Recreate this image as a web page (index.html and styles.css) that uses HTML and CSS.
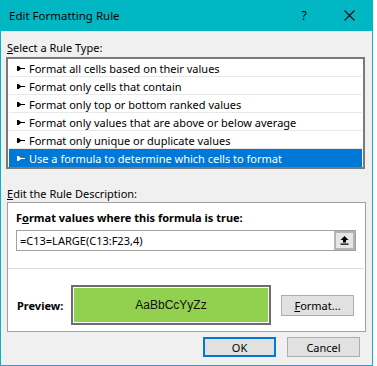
FILE: index.html
```html
<!DOCTYPE html>
<html lang="en">
<head>
  <meta charset="UTF-8" />
  <title>Edit Formatting Rule</title>
  <link rel="stylesheet" href="styles.css">
</head>
<body>
  <div class="dialog">
    <div class="titlebar">
      <span class="title">Edit Formatting Rule</span>
      <span class="help">?</span>
      <svg class="close" width="11" height="11" viewBox="0 0 11 11">
        <path d="M0.5 0.5L10.5 10.5M10.5 0.5L0.5 10.5" stroke="#111" stroke-width="1.1" fill="none"/>
      </svg>
    </div>

    <div class="content">
      <div class="label"><u>S</u>elect a Rule Type:</div>
      <ul class="rules">
        <li><svg class="bullet" width="8" height="5" viewBox="0 0 8 5"><path d="M0 0h1.5l2.5 2h4v1h-4l-2.5 2H0z"/></svg>Format all cells based on their values</li>
        <li><svg class="bullet" width="8" height="5" viewBox="0 0 8 5"><path d="M0 0h1.5l2.5 2h4v1h-4l-2.5 2H0z"/></svg>Format only cells that contain</li>
        <li><svg class="bullet" width="8" height="5" viewBox="0 0 8 5"><path d="M0 0h1.5l2.5 2h4v1h-4l-2.5 2H0z"/></svg>Format only top or bottom ranked values</li>
        <li><svg class="bullet" width="8" height="5" viewBox="0 0 8 5"><path d="M0 0h1.5l2.5 2h4v1h-4l-2.5 2H0z"/></svg>Format only values that are above or below average</li>
        <li><svg class="bullet" width="8" height="5" viewBox="0 0 8 5"><path d="M0 0h1.5l2.5 2h4v1h-4l-2.5 2H0z"/></svg>Format only unique or duplicate values</li>
        <li class="selected"><svg class="bullet" width="8" height="5" viewBox="0 0 8 5"><path d="M0 0h1.5l2.5 2h4v1h-4l-2.5 2H0z"/></svg>Use a formula to determine which cells to format</li>
      </ul>

      <div class="label desc-label"><u>E</u>dit the Rule Description:</div>
      <div class="desc">
        <div class="desc-top">
          <div class="bold">F<u>o</u>rmat values where this formula is true:</div>
          <div class="formula">
            <span class="formula-text">=C13=LARGE(C13:F23,4)</span>
            <span class="ref-btn">
              <svg width="9" height="9" viewBox="0 0 9 9">
                <path d="M4.5 0L8.5 4H6V6.5H3V4H0.5Z M0.5 7.5H8.5V8.8H0.5Z" fill="#000"/>
              </svg>
            </span>
          </div>
        </div>
        <div class="desc-bottom">
          <span class="bold preview-label">Preview:</span>
          <div class="preview"><div class="preview-fill">AaBbCcYyZz</div></div>
          <button class="btn format-btn"><u>F</u>ormat...</button>
        </div>
      </div>

      <div class="actions">
        <button class="btn default">OK</button>
        <button class="btn">Cancel</button>
      </div>
    </div>
  </div>
</body>
</html>
```

FILE: styles.css
```css
body {
  margin: 0;
  background: #fff;
  font-family: "Segoe UI", "Noto Sans", sans-serif;
  font-size: 11px;
  line-height: 15px;
  color: #000;
}
.dialog {
  width: 373px;
  height: 366px;
  box-sizing: border-box;
  border: 1px solid #00b7c3;
  border-top: none;
  background: #f0f0f0;
}
.titlebar {
  height: 31px;
  background: #00b7c3;
  display: flex;
  align-items: center;
  padding-left: 8px;
  font-size: 11.5px;
}
.help {
  margin-left: auto;
  width: 12px;
  text-align: center;
  font-size: 12px;
}
.close {
  margin-left: 34px;
  margin-right: 17px;
}
.content {
  padding: 0 12px 0 5px;
}
.label {
  margin: 9px 0 2px 1px;
}
.rules {
  list-style: none;
  margin: 0;
  padding: 0;
  width: 359px;
  height: 112px;
  box-sizing: border-box;
  border: 2px solid #7a7a7a;
  background: #fff;
}
.rules li {
  display: flex;
  align-items: center;
  height: 18px;
  box-sizing: border-box;
  padding: 2px 0 0 8px;
  margin: 0 1px;
  border-bottom: 1px solid #e8e8e8;
}
.rules li.selected {
  background: #0078d7;
  color: #fff;
  border-bottom-color: #0078d7;
}
.bullet {
  margin-right: 4px;
  fill: #000;
}
.selected .bullet {
  fill: #fff;
}
.desc-label {
  margin-top: 17px;
  margin-bottom: 1px;
}
.desc {
  margin-left: 1px;
  width: 359px;
  box-sizing: border-box;
  border: 1px solid #a0a0a0;
  background: #fff;
}
.desc-top {
  height: 65px;
  box-sizing: border-box;
  padding: 7px 9px 0 8px;
}
.bold {
  font-weight: bold;
}
.formula {
  display: flex;
  margin-top: 5px;
  width: 340px;
  height: 21px;
  box-sizing: border-box;
  border: 1px solid #a0a0a0;
}
.formula-text {
  flex: 1;
  padding-left: 3px;
  line-height: 19px;
}
.ref-btn {
  width: 21px;
  box-sizing: border-box;
  border: 2px solid #b4b4b4;
  background: #e6e6e6;
  display: flex;
  align-items: center;
  justify-content: center;
}
.desc-bottom {
  display: flex;
  align-items: center;
  border-top: 1px solid #dcdcdc;
  margin: 0 1px 0 0;
  padding: 16px 0 6px 9px;
}
.preview-label {
  width: 54px;
}
.preview {
  width: 200px;
  height: 40px;
  box-sizing: border-box;
  border: 2px solid #6d6d6d;
  padding: 1px;
  background: #fff;
}
.preview-fill {
  height: 100%;
  background: #92d050;
  display: flex;
  align-items: center;
  justify-content: center;
  font-family: "Liberation Sans", Arial, sans-serif;
  font-size: 12px;
  color: #111;
}
.btn {
  font-family: inherit;
  font-size: 11px;
  color: #000;
  background: #e1e1e1;
  border: 1px solid #adadad;
  padding: 0;
  width: 73px;
  height: 20px;
}
.format-btn {
  margin-left: 10px;
  height: 21px;
}
.actions {
  display: flex;
  justify-content: flex-end;
  gap: 11px;
  margin-top: 5px;
}
.btn.default {
  border: 2px solid #0078d7;
}
```
